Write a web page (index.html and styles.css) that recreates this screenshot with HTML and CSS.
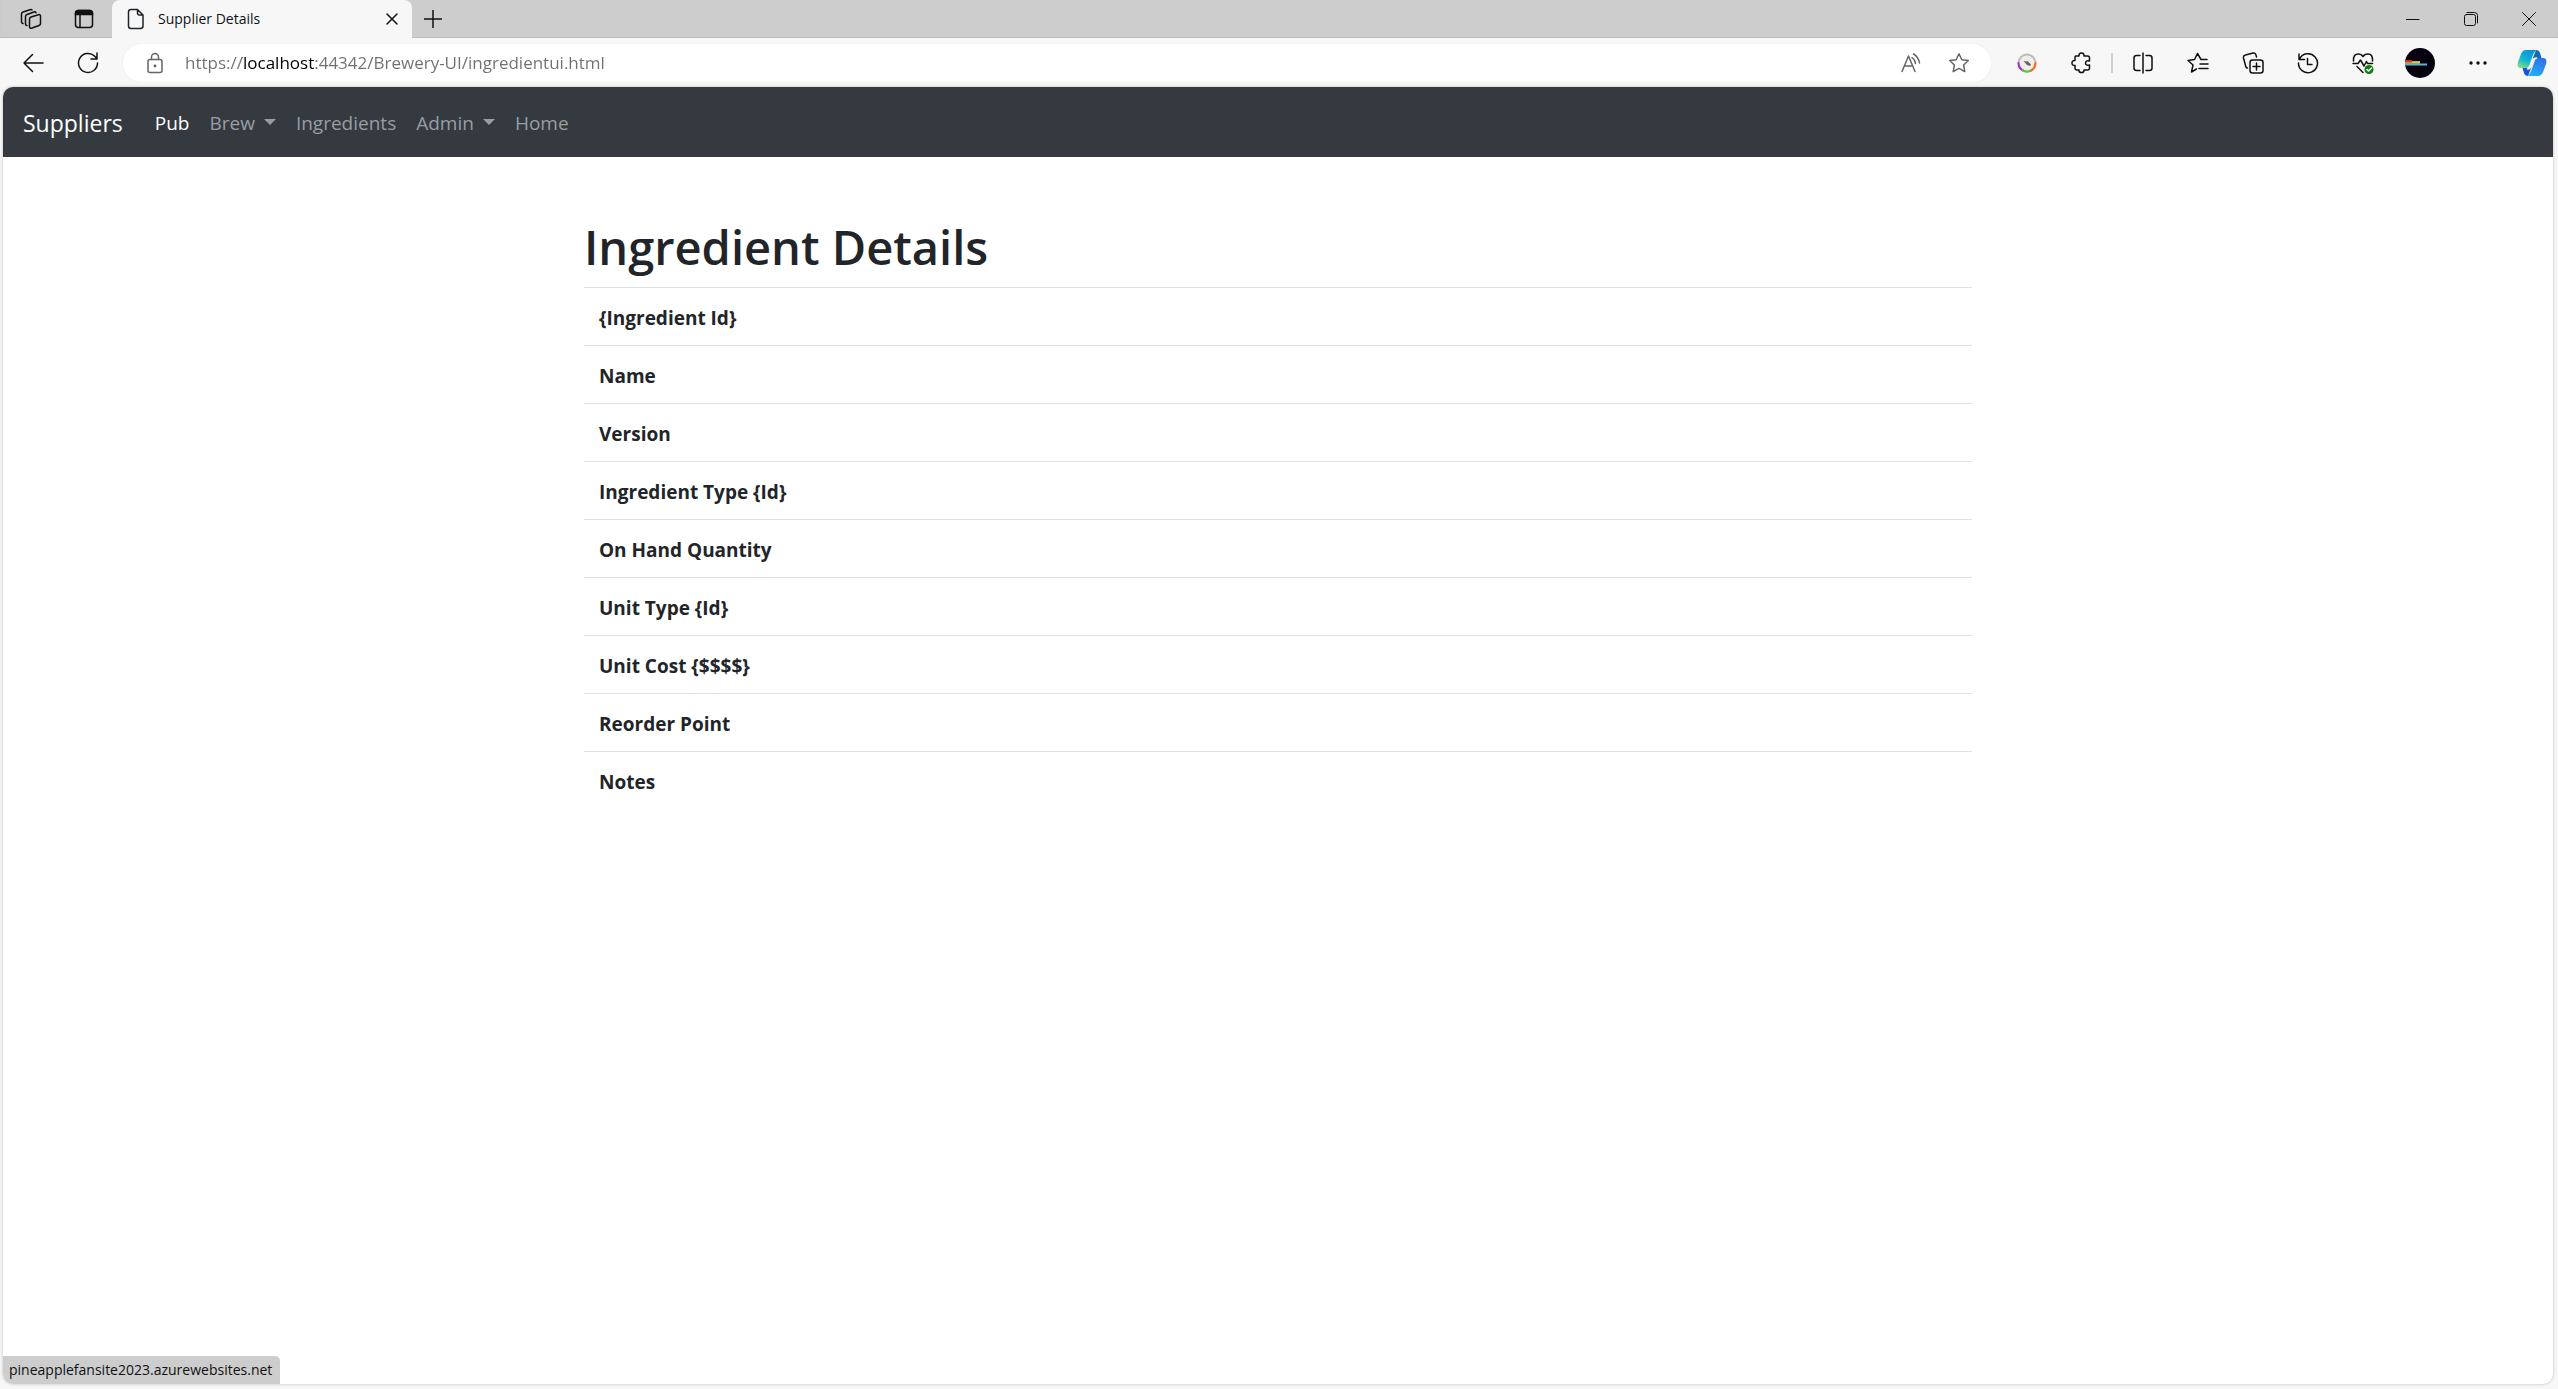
FILE: index.html
```html
<!DOCTYPE html>
<html lang="en">
<head>
<meta charset="utf-8">
<title>Supplier Details</title>
<link rel="stylesheet" href="styles.css">
</head>
<body>
<header class="tabstrip">
  <button class="strip-btn" aria-label="Workspaces"><svg width="22" height="22" viewBox="0 0 22 22"><path d="M9.500 11q0-1.500 1.500-2l7.500-2.300q2-.5 2 1.300v7.500q0 1.500-1.500 2L12 20q-2.500.8-2.500-1.500zM7 17.500Q5.500 17.500 5.500 16V8.500Q5.500 7 7 6.500L14 4q1.500-.5 2 .7M3 15.500Q1.500 15.200 1.500 14V6Q1.500 4.500 3 4l7-2.300q1.500-.5 2 .3"/></svg></button>
  <button class="strip-btn" aria-label="Tab actions"><svg width="20" height="20" viewBox="0 0 20 20"><rect x="1.500" y="1.500" width="17" height="17" rx="3"/><path d="M6 6v12"/><path class="solid" d="M1.500 5.500v-1q0-3 3-3h11q3 0 3 3v1z"/></svg></button>
  <div class="tab">
    <svg width="18" height="22" viewBox="0 0 18 22"><path d="M4 1.500h6.500l5.500 5.500v11q0 2.500-2.500 2.500H4Q1.500 20.500 1.500 18V4Q1.500 1.500 4 1.500zM10.500 1.500V5q0 2 2 2H16"/></svg>
    <span class="tab-title">Supplier Details</span>
    <button class="tab-close" aria-label="Close tab"><svg width="12" height="12" viewBox="0 0 12 12"><path d="M1 1l10 10M11 1L1 11"/></svg></button>
  </div>
  <button class="new-tab" aria-label="New tab"><svg width="18" height="18" viewBox="0 0 18 18"><path d="M9 0v18M0 9h18"/></svg></button>
  <div class="window-controls">
    <button aria-label="Minimize"><svg width="14" height="14" viewBox="0 0 14 14"><path d="M0 7.500h13"/></svg></button>
    <button aria-label="Restore"><svg width="14" height="14" viewBox="0 0 14 14"><rect x=".5" y="2.500" width="11" height="11" rx="2"/><path d="M3 .5h7.500q3 0 3 3V11"/></svg></button>
    <button aria-label="Close"><svg width="14" height="14" viewBox="0 0 14 14"><path d="M.5.5l13 13M13.500.5l-13 13"/></svg></button>
  </div>
</header>
<div class="toolbar">
  <button class="tool" aria-label="Back"><svg width="22" height="20" viewBox="0 0 22 20"><path d="M21 10H2M10.500 1.500L2 10l8.500 8.500"/></svg></button>
  <button class="tool" aria-label="Refresh"><svg width="22" height="22" viewBox="0 0 22 22"><path d="M20.500 11a9.500 9.500 0 1 1-3-7L20 6.500M20 1v6h-6"/></svg></button>
  <form class="address">
    <button class="addr-btn" type="button" aria-label="Site information"><svg width="18" height="22" viewBox="0 0 18 22"><rect x="2" y="7.500" width="14" height="13" rx="2"/><path d="M5.500 7.500V5a3.500 3.500 0 0 1 7 0v2.500"/><circle class="solid" cx="9" cy="14" r=".7"/></svg></button>
    <input class="url" type="text" aria-label="Address" value="https://localhost:44342/Brewery-UI/ingredientui.html">
    <button class="addr-btn" type="button" aria-label="Read aloud"><svg width="22" height="20" viewBox="0 0 22 20"><path d="M2 18.500L8.500 3 15 18.500M4.500 13h8M12 4.500q3 2 3.500 6M13.500 1q5 3 6 9"/></svg></button>
    <button class="addr-btn" type="button" aria-label="Add to favorites"><svg width="22" height="22" viewBox="0 0 22 22"><path d="M11 1.800l2.800 5.900 6.500.8-4.700 4.500 1.200 6.600L11 16.400l-5.800 3.200L6.400 13 1.700 8.500l6.500-.8z"/></svg></button>
  </form>
  <button class="tool" aria-label="Extension"><svg width="20" height="20" viewBox="0 0 20 20"><circle cx="10" cy="10" r="8.500" fill="#eee" stroke="#bcbcb8" stroke-width="2"/><path d="M1.500 10a8.500 8.500 0 0 0 4.200 7.400" stroke="#a030d0" stroke-width="2"/><path d="M5.700 17.400a8.500 8.500 0 0 0 8.600 0" stroke="#62c832" stroke-width="2"/><path d="M14.300 17.400A8.500 8.500 0 0 0 18.500 10" stroke="#ff6b10" stroke-width="2"/><path d="M6.500 8l3 .5 1-.5 3.500 3.500-1 1.500-3-1z" fill="#66665a" stroke="none"/></svg></button>
  <button class="tool" aria-label="Extensions"><svg width="22" height="22" viewBox="0 0 22 22"><path d="M4.500 4H8q-.3-3 2.500-3t2.500 3h3.500q2 0 2 2v3q-4-.8-4 2t4 2v3q0 2-2 2H13q.3 2.500-2.500 2.500T8 18H6q-2 0-2-2v-2.500q-3 .3-3-2.500T4 8.500V5z"/></svg></button>
  <span class="separator"></span>
  <button class="tool" aria-label="Split screen"><svg width="22" height="22" viewBox="0 0 22 22"><path d="M8 3.500H4.500q-2.500 0-2.500 2.500v10q0 2.500 2.500 2.500H8M14 3.500h3.500Q20 3.500 20 6v10q0 2.500-2.500 2.500H14M11 1v20"/></svg></button>
  <button class="tool" aria-label="Favorites"><svg width="22" height="22" viewBox="0 0 22 22"><path d="M20 7.500h-6l-3.500-6-3 6-6.500 1L6 13l-1.500 7 5-3M13 12h8M12 16.500h9"/></svg></button>
  <button class="tool" aria-label="Collections"><svg width="22" height="22" viewBox="0 0 22 22"><rect x="8" y="8" width="13" height="13" rx="2.500"/><path d="M14.500 11v7M11 14.500h7M5.500 16Q4 16 3.500 13.500L1.500 6q-.5-2.500 2-3L11 1q2.500-.5 3 2l.5 2"/></svg></button>
  <button class="tool" aria-label="History"><svg width="22" height="22" viewBox="0 0 22 22"><path d="M2 2v5.500h5.500M2.500 7A9.500 9.500 0 1 1 1.500 11M10.500 6.500v6H15"/></svg></button>
  <button class="tool" aria-label="Browser essentials"><svg width="22" height="22" viewBox="0 0 22 22"><path d="M1.500 9Q1 2 6.500 2 9.500 2 11 4.500 12.500 2 16 2q5 0 4.500 7M1 11.500h5L8.500 8l3.500 6 2.500-4.500 1 2h5M5 14.500l6 6"/><circle cx="17" cy="17.500" r="4.500" fill="#107c10" stroke="none"/><path d="M15 17.500l1.500 1.500 3-3" stroke="#fff"/></svg></button>
  <button class="tool profile" aria-label="Profile"><svg width="30" height="30" viewBox="0 0 30 30"><circle cx="15" cy="15" r="15" fill="#05010f" stroke="none"/><g stroke-linecap="butt"><path d="M.2 13H7" stroke="#e83020" stroke-width="2"/><path d="M7 14h8" stroke="#e8a818" stroke-width="2"/><path d="M0 15h15" stroke="#d8d848"/><path d="M.1 16.500H22" stroke="#58b8d0" stroke-width="2"/></g></svg></button>
  <button class="tool" aria-label="Settings and more"><svg width="18" height="4" viewBox="0 0 18 4"><g fill="currentColor" stroke="none"><circle cx="2" cy="2" r="1.700"/><circle cx="9" cy="2" r="1.700"/><circle cx="16" cy="2" r="1.700"/></g></svg></button>
  <button class="tool copilot" aria-label="Copilot"><svg width="30" height="28" viewBox="0 0 30 28"><defs><linearGradient id="ca" x1="0.700" y1="0" x2="0.200" y2="1"><stop offset="0" stop-color="#0a8fd8"/><stop offset=".55" stop-color="#10b4d8"/><stop offset="1" stop-color="#7be080"/></linearGradient><linearGradient id="cb" x1="0.200" y1="1" x2="0.700" y2="0"><stop offset="0" stop-color="#2f6fe8"/><stop offset="1" stop-color="#20b0f8"/></linearGradient></defs><g stroke="none"><path fill="#1068b8" d="M19 1q3 0 4 3l1.500 5H20q-3 0-4.500 1z"/><path fill="url(#ca)" d="M9 1h11q-3 1-4.800 7L12 17q-.8 2-3 2H4Q-.5 19 1 13L4 5Q5.500 1 9 1z"/><g transform="rotate(180 15 14)"><path fill="#1850e0" d="M19 1q3 0 4 3l1.500 5H20q-3 0-4.500 1z"/><path fill="url(#cb)" d="M9 1h11q-3 1-4.800 7L12 17q-.8 2-3 2H4Q-.5 19 1 13L4 5Q5.500 1 9 1z"/></g><path fill="#f7f7f7" d="M19.500 9q-2.500 0-3.500 3l-2 5q-1 3-3.500 3 2 0 3-3l2-5q1-3 4-3z" stroke="#f7f7f7"/></g></svg></button>
</div>
<main class="page">
  <nav class="navbar">
    <a class="brand" href="#">Suppliers</a>
    <a class="link active" href="#">Pub</a>
    <a class="link dropdown" href="#">Brew</a>
    <a class="link" href="#">Ingredients</a>
    <a class="link dropdown" href="#">Admin</a>
    <a class="link" href="#">Home</a>
  </nav>
  <section class="container">
    <h1>Ingredient Details</h1>
    <table class="details">
      <tbody>
        <tr><th scope="row">{Ingredient Id}</th><td></td></tr>
        <tr><th scope="row">Name</th><td></td></tr>
        <tr><th scope="row">Version</th><td></td></tr>
        <tr><th scope="row">Ingredient Type {Id}</th><td></td></tr>
        <tr><th scope="row">On Hand Quantity</th><td></td></tr>
        <tr><th scope="row">Unit Type {Id}</th><td></td></tr>
        <tr><th scope="row">Unit Cost {$$$$}</th><td></td></tr>
        <tr><th scope="row">Reorder Point</th><td></td></tr>
        <tr><th scope="row">Notes</th><td></td></tr>
      </tbody>
    </table>
  </section>
  <div class="status">pineapplefansite2023.azurewebsites.net</div>
</main>
</body>
</html>
```
FILE: styles.css
```css
* { box-sizing: border-box; }

body {
  margin: 0;
  height: 100vh;
  display: flex;
  flex-direction: column;
  background: #f7f7f7;
  color: #212529;
  font-family: "Open Sans", "Noto Sans", sans-serif;
}

button {
  display: flex;
  align-items: center;
  justify-content: center;
  padding: 0;
  border: 0;
  background: none;
  color: #111;
}

svg {
  display: block;
  flex: none;
  fill: none;
  stroke: currentColor;
  stroke-width: 1.5;
  stroke-linecap: round;
  stroke-linejoin: round;
}

.solid { fill: currentColor; }

/* Tab strip */
.tabstrip {
  display: flex;
  height: 38px;
  padding-left: 4px;
  background: #cdcdcd;
  box-shadow: inset 0 -1px 1px #bdbdbd;
}

.strip-btn { width: 53px; }

.tab {
  display: flex;
  align-items: center;
  width: 300px;
  margin-left: 2px;
  padding: 0 12px 0 15px;
  border-radius: 8px 8px 0 0;
  background: #f7f7f7;
}

.tab-title {
  flex: 1;
  padding: 0 0 2px 13px;
  font-size: 14px;
  color: #111;
}

.tab-close { width: 16px; height: 20px; }

.new-tab { width: 42px; }

.window-controls {
  display: flex;
  margin-left: auto;
}

.window-controls button { width: 58px; }
.window-controls svg { stroke-width: 1; }

/* Toolbar */
.toolbar {
  display: flex;
  align-items: center;
  height: 49px;
  padding-left: 5px;
}

.tool {
  flex: none;
  width: 55px;
  height: 38px;
}

.profile { width: 60px; }
.copilot { width: 53px; }

.address {
  flex: 1;
  display: flex;
  height: 38px;
  margin: 0 8px;
  padding: 0 8px;
  border-radius: 19px;
  background: #fff;
  box-shadow: 0 0 3px #ececec;
}

.addr-btn { width: 48px; color: #666; }

.url {
  flex: 1;
  padding: 0 6px;
  border: 0;
  outline: 0;
  font: 17px/24px "Open Sans", "Noto Sans", sans-serif;
  /* Host name drawn darker than the rest of the address */
  background: linear-gradient(90deg, #707070 63px, #000 63px 135px, #707070 135px);
  background-clip: text;
  -webkit-text-fill-color: transparent;
}

.separator {
  width: 2px;
  height: 20px;
  margin: 0 2px;
  background: #cfcfcf;
}

/* Page */
.page {
  position: relative;
  flex: 1;
  margin: 0 5px 5px 3px;
  border-radius: 10px;
  overflow: hidden;
  background: #fff;
  box-shadow: 0 0 3px #b8b8b8;
}

.navbar {
  display: flex;
  align-items: center;
  height: 70px;
  padding: 2px 20px 0;
  background: #343a40;
}

.navbar a { text-decoration: none; }

.brand {
  margin-right: 22px;
  font-size: 23px;
  color: #fff;
}

.link {
  padding: 0 10px;
  font-size: 19px;
  color: #9a9da0;
}

.navbar .active { color: #fff; }

.dropdown::after {
  content: "";
  display: inline-block;
  margin-left: 9px;
  vertical-align: 5px;
  border: 6px solid transparent;
  border-top-color: currentColor;
  border-bottom: 0;
}

.container {
  max-width: 1388px;
  margin: 0 auto;
  padding-top: 60px;
}

h1 {
  margin: 0 0 10px;
  font-size: 47px;
  font-weight: 600;
  line-height: 60px;
}

.details {
  width: 100%;
  border-spacing: 0;
}

.details th,
.details td {
  height: 58px;
  padding: 2px 15px 0;
  border-top: 1px solid #dee2e6;
  text-align: left;
  font-size: 19px;
  font-weight: 700;
}

.status {
  position: absolute;
  left: 0;
  bottom: 0;
  height: 28px;
  padding: 0 8px 0 6px;
  border-top-right-radius: 5px;
  background: #cdcdcd;
  font-size: 14px;
  line-height: 28px;
  color: #111;
}
```
